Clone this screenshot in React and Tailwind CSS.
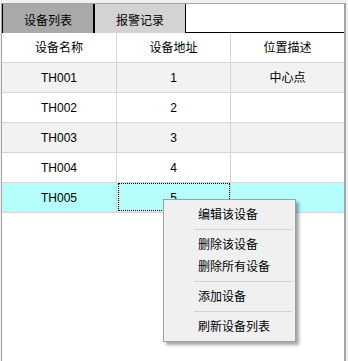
import React from "react";

const font = { fontFamily: '"Liberation Sans", "Noto Sans CJK SC", sans-serif' };

const rows = [
  { name: "TH001", addr: "1", desc: "中心点", bg: "bg-[#f2f2f2]" },
  { name: "TH002", addr: "2", desc: "", bg: "bg-white" },
  { name: "TH003", addr: "3", desc: "", bg: "bg-[#f2f2f2]" },
  { name: "TH004", addr: "4", desc: "", bg: "bg-white" },
  { name: "TH005", addr: "5", desc: "", bg: "bg-[#b4fffb]", selected: true },
];

function Cell({ children, last, focus }) {
  return (
    <div
      className={
        "relative h-[30px] border-b border-[#d6d6d6] flex items-center justify-center pt-px text-[12px] text-black " +
        (last ? "" : "border-r")
      }
    >
      {focus && (
        <div className="absolute left-px right-0 top-0 bottom-[1px] border border-dotted border-black" />
      )}
      <span className="relative">{children}</span>
    </div>
  );
}

function MenuItem({ children }) {
  return (
    <div className="h-[22px] flex items-center pl-[34px] pt-[2px] text-[12px] text-black">{children}</div>
  );
}

function Sep() {
  return (
    <div className="h-[8px] flex items-center ml-[30px] mr-[3px]">
      <div className="h-px w-full bg-[#d2d2d2]" />
    </div>
  );
}

export default function App() {
  return (
    <div className="relative w-[348px] h-[361px] bg-[#f0f0f0] pt-[3px] pl-px pr-[2px] overflow-hidden" style={font}>
      <div className="h-[358px] border-t border-l border-r-2 border-[#a3a3a3] bg-white flex flex-col">
        {/* tabs */}
        <div className="flex h-[29px] shrink-0">
          <div className="w-[93px] bg-[#a9a9a9] border-l border-r-2 border-black flex items-center justify-center pt-[5px] text-[12px] text-black">
            设备列表
          </div>
          <div className="w-[91px] bg-[#d3d3d3] border-r border-black flex items-center justify-center pt-[5px] text-[12px] text-black">
            报警记录
          </div>
          <div className="flex-1 border-b border-black" />
        </div>
        {/* table */}
        <div className="grid grid-cols-[115px_114px_1fr] border-[#d6d6d6]">
          <Cell>设备名称</Cell>
          <Cell>设备地址</Cell>
          <Cell last>位置描述</Cell>
        </div>
        {rows.map((r) => (
          <div key={r.name} className={"grid grid-cols-[115px_114px_1fr] border-[#d6d6d6] " + r.bg}>
            <Cell>{r.name}</Cell>
            <Cell focus={r.selected}>{r.addr}</Cell>
            <Cell last>{r.desc}</Cell>
          </div>
        ))}
      </div>

      {/* context menu */}
      <div className="absolute left-[163px] top-[199px] w-[133px] h-[143px] bg-[#f0f0f0] border border-[#a0a0a0] pt-[3px] shadow-[3px_3px_3px_rgba(0,0,0,0.35)]">
        <MenuItem>编辑该设备</MenuItem>
        <Sep />
        <MenuItem>删除该设备</MenuItem>
        <MenuItem>删除所有设备</MenuItem>
        <Sep />
        <MenuItem>添加设备</MenuItem>
        <Sep />
        <MenuItem>刷新设备列表</MenuItem>
      </div>
    </div>
  );
}
